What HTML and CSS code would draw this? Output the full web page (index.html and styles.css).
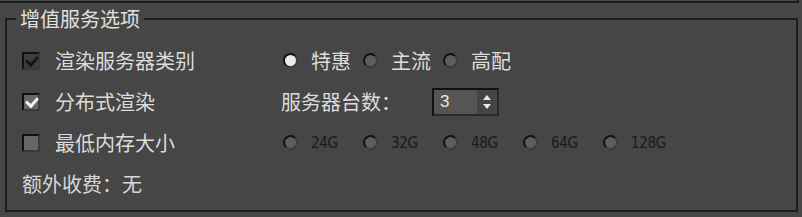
FILE: index.html
```html
<!DOCTYPE html>
<html lang="zh-CN">

<head>
    <meta charset="UTF-8">
    <meta name="viewport" content="width=device-width, initial-scale=1.0">
    <title>增值服务选项</title>
    <link rel="stylesheet" href="styles.css">
</head>

<body>
    <div class="top-panel"></div>
    <fieldset class="group">
        <legend>增值服务选项</legend>

        <div class="row">
            <label class="left">
                <input type="checkbox" class="check" checked disabled>
                <span>渲染服务器类别</span>
            </label>
            <div class="right options">
                <label class="opt"><input type="radio" name="type" class="radio" checked><span>特惠</span></label>
                <label class="opt"><input type="radio" name="type" class="radio"><span>主流</span></label>
                <label class="opt"><input type="radio" name="type" class="radio"><span>高配</span></label>
            </div>
        </div>

        <div class="row">
            <label class="left">
                <input type="checkbox" class="check" checked>
                <span>分布式渲染</span>
            </label>
            <div class="right">
                <span class="count-label">服务器台数：</span>
                <div class="spin">
                    <span class="spin-value">3</span>
                    <span class="spin-btns">
                        <i class="up"></i>
                        <i class="down"></i>
                    </span>
                </div>
            </div>
        </div>

        <div class="row">
            <label class="left">
                <input type="checkbox" class="check">
                <span>最低内存大小</span>
            </label>
            <div class="right mem">
                <label class="mem-opt"><input type="radio" name="mem" class="radio" disabled><span class="mem-text">24G</span></label>
                <label class="mem-opt"><input type="radio" name="mem" class="radio" disabled><span class="mem-text">32G</span></label>
                <label class="mem-opt"><input type="radio" name="mem" class="radio" disabled><span class="mem-text">48G</span></label>
                <label class="mem-opt"><input type="radio" name="mem" class="radio" disabled><span class="mem-text">64G</span></label>
                <label class="mem-opt"><input type="radio" name="mem" class="radio" disabled><span class="mem-text">128G</span></label>
            </div>
        </div>

        <div class="row">
            <span class="fee">额外收费：无</span>
        </div>
    </fieldset>
</body>

</html>
```

FILE: styles.css
```css
body {
    margin: 0;
    background: #464646;
    color: #dcdcdc;
    font-family: "Noto Sans CJK SC", "Liberation Sans", sans-serif;
    font-size: 20px;
    width: 802px;
    height: 217px;
    overflow: hidden;
}

/* 上方面板只露出底边 */
.top-panel {
    width: 797px;
    height: 1px;
    border-bottom: 2px solid #1c1c1c;
    border-right: 2px solid #1c1c1c;
}

.group {
    margin: 5px 4px 0 5px;
    padding: 0 0 0 15px;
    border: 2px solid #1c1c1c;
    height: 204px;
    box-sizing: border-box;
    min-width: 0;
}

.group legend {
    margin-left: -6px;
    padding: 0 4px;
    line-height: 22px;
    color: #e0e0e0;
}

.row {
    display: flex;
    align-items: center;
    height: 41px;
}

.row:first-of-type {
    margin-top: 10px;
}

.left {
    width: 261px;
    display: flex;
    align-items: center;
    gap: 15px;
}

.right {
    display: flex;
    align-items: center;
}

.options {
    gap: 12px;
}

.opt {
    display: flex;
    align-items: center;
    gap: 13px;
}

/* 复选框 */
.check {
    appearance: none;
    margin: 0;
    width: 18px;
    height: 18px;
    box-sizing: border-box;
    border: 2px solid;
    border-color: #111 #3a3a3a #3a3a3a #111;
    background: #666;
    position: relative;
}

.check:disabled {
    background: #3d3d3d;
}

.check:checked::after {
    content: "";
    position: absolute;
    left: 4px;
    top: 0;
    width: 5px;
    height: 9px;
    border: solid #f2f2f2;
    border-width: 0 3px 3px 0;
    transform: rotate(42deg);
}

.check:disabled:checked::after {
    border-color: #161616;
}

/* 单选框 */
.radio {
    appearance: none;
    margin: 0;
    width: 15px;
    height: 15px;
    box-sizing: border-box;
    border-radius: 50%;
    border: 2px solid;
    border-color: #111 #3c3c3c #3c3c3c #111;
    background: #5c5c5c;
}

.radio:checked {
    background: #ececec;
}

.count-label {
    width: 151px;
    margin-left: -2px;
}

/* 数字调节框 */
.spin {
    display: flex;
    height: 28px;
    width: 67px;
    box-sizing: border-box;
    border: 2px solid;
    border-color: #111 #2a2a2a #2a2a2a #111;
}

.spin-value {
    flex: 1;
    background: #555;
    color: #e8e8e8;
    font-family: "Liberation Sans", sans-serif;
    font-size: 17px;
    line-height: 24px;
    padding-left: 6px;
}

.spin-btns {
    width: 20px;
    background: #444;
    display: flex;
    flex-direction: column;
    align-items: center;
    justify-content: center;
    gap: 4px;
}

.spin-btns i {
    width: 0;
    height: 0;
    border-left: 4px solid transparent;
    border-right: 4px solid transparent;
}

.spin-btns .up {
    border-bottom: 5px solid #e8e8e8;
}

.spin-btns .down {
    border-top: 5px solid #e8e8e8;
}

/* 内存选项（不可用） */
.mem-opt {
    width: 80px;
    display: flex;
    align-items: center;
    gap: 13px;
}

.mem-opt .mem-text {
    color: #1a1a1a;
    font-family: "DejaVu Sans Condensed", "DejaVu Sans", sans-serif;
    font-stretch: condensed;
    font-size: 15px;
    letter-spacing: -0.3px;
}

.fee {
    color: #d8d8d8;
}
```
